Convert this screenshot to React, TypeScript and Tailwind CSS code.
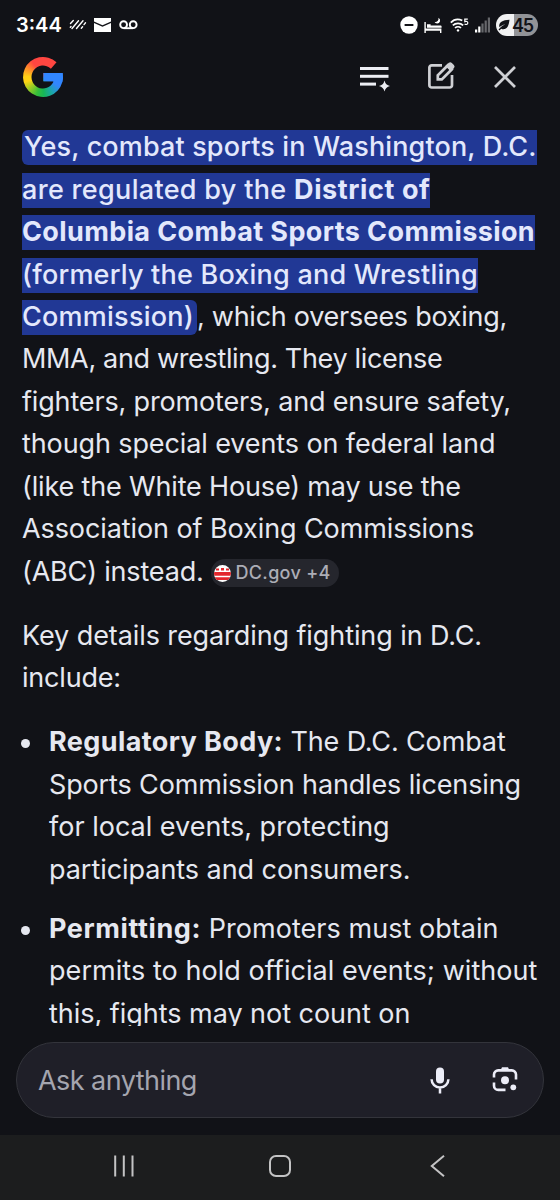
import type { ReactNode } from 'react';

function Line({ children, className = '' }: { children: ReactNode; className?: string }) {
  return <span className={`block h-[42.45px] leading-[42.45px] whitespace-nowrap ${className}`}>{children}</span>;
}

function Mark({ children, className = '' }: { children: ReactNode; className?: string }) {
  return <mark className={`bg-[#213895] text-[#e3e8fc] font-medium pb-[2px] ${className}`}>{children}</mark>;
}

function StatusBar() {
  return (
    <div className="h-[50px] flex items-center text-white pl-4 pr-[22px]">
      <span className="w-[44px] text-[20px] leading-[50px] font-semibold">3:44</span>

      {/* Notification icons */}
      <svg className="ml-[9px]" width="18" height="12" viewBox="0 0 18 12" stroke="currentColor" strokeWidth="1.4" strokeLinecap="round">
        <path d="M1.5 4.5 4.3 1.5M3 9.5 9.5 1.8M7.5 9.5 14 1.8" />
        <path d="M1.3 8.2 2 7.5M12.3 9.2 13.6 7.8M15 5.6 16.5 3.8" />
      </svg>
      <svg className="ml-[7px]" width="17" height="14" viewBox="0 0 17 14" fill="currentColor">
        <path d="M0 0h17v3.4L8.5 7.2 0 3.4Z" />
        <path d="M0 5l8.5 3.8L17 5v9H0Z" />
      </svg>
      <svg className="ml-2" width="19" height="10" viewBox="0 0 19 10" fill="none" stroke="currentColor" strokeWidth="1.9">
        <circle cx="4.6" cy="4.7" r="3.4" />
        <circle cx="14.2" cy="4.7" r="3.4" />
        <path d="M4.6 8.2h9.6" />
      </svg>

      {/* System icons */}
      <svg className="ml-auto" width="18" height="18" viewBox="0 0 18 18">
        <circle cx="9" cy="9" r="8.7" fill="currentColor" />
        <path d="M4.6 9h8.8" stroke="#111217" strokeWidth="2" />
      </svg>
      <svg className="ml-[6px]" width="19" height="17" viewBox="0 0 19 17" fill="currentColor">
        <path d="M.4 5h1.4v6.6h15.6V16H16v-2.2H1.8V16H.4Z" />
        <path d="M3 7.2h3.6v1.2h10a1 1 0 0 1 1 1v1.3H3Z" />
        <path d="M14.4.8a3.2 3.2 0 0 1-4 4 3.1 3.1 0 0 0 5.6-.3A3.2 3.2 0 0 0 14.4.8Z" />
      </svg>
      <svg className="ml-[7px]" width="19" height="15" viewBox="0 0 19 15" fill="none" stroke="currentColor" strokeWidth="1.7">
        <path d="M.8 4.6C4 1.3 8.6.8 12.3 2.6" />
        <path d="M2.8 7.4c2.9-2.8 7.5-2.8 10.4 0" />
        <path d="M5 10c1.700-1.600 4.300-1.600 6 0" />
        <circle cx="8" cy="12.4" r="1.2" fill="currentColor" stroke="none" />
        <path d="M17.8 1.100h-3v2.500c1.600-.6 3-.2 3 1.300 0 1.600-1.900 2-3.200 1.100" strokeWidth="1.2" />
      </svg>
      <svg className="ml-[6px]" width="16" height="16" viewBox="0 0 16 16" fill="currentColor">
        <rect x="0" y="12.5" width="2.2" height="3" />
        <rect x="3.2" y="9.5" width="2.2" height="6" />
        <g fill="#66676b">
          <rect x="6.4" y="6.5" width="2.2" height="9" />
          <rect x="9.6" y="3.5" width="2.2" height="12" />
          <rect x="12.8" y=".5" width="2.2" height="15" />
        </g>
      </svg>
      <div className="ml-[5px] w-[42px] h-[22px] rounded-full flex items-center overflow-hidden text-[#111217] bg-[linear-gradient(90deg,#f1f1f2_44%,#929397_44%)]">
        <svg className="ml-[2px]" width="12" height="12" viewBox="0 0 12 12" fill="currentColor">
          <path d="M11.5.8C10.800 6.500 9.300 10.300 5.300 10.300c-.9 0-1.500-.2-2-.6l-2 1.800-.8-.8C2.300 8.300 4.500 6.500 7.500 5.200 4.800 5.700 3 6.700 1.400 8.300.3 3.500 4.600.9 11.500.8Z" />
        </svg>
        <span className="ml-[2px] mt-px text-[18px] leading-none font-semibold tracking-[-1.2px]">45</span>
      </div>
    </div>
  );
}

function GoogleLogo() {
  return (
    <div className="w-10 h-10 overflow-hidden bg-[conic-gradient(#ff4641_0deg,#ff4641_55deg,#3186ff_55deg,#3186ff_120deg,#1ba6a8_150deg,#17b657_178deg,#35bf3a_200deg,#a5cc22_232deg,#ffd314_255deg,#ffcf16_272deg,#ff8b2a_300deg,#ff4641_325deg)] [clip-path:path('M33.5_5.2A20_20_0_1_0_39.6_16H20.4V24.2H30.7A11.5_11.5_0_1_1_27.9_11.7Z')]">
      <div className="mt-[15px] ml-5 w-5 h-[9.5px] bg-[#3186ff]" />
    </div>
  );
}

function Header() {
  return (
    <header className="h-[54px] flex items-center pl-[23px] pr-[44px] text-[#cfd0d4]">
      <GoogleLogo />
      <svg className="ml-auto mt-[3px]" width="32" height="26" viewBox="0 0 32 26" fill="#ecedf3">
        <rect x="1" y="1" width="28.5" height="3" />
        <rect x="1" y="8.8" width="28.5" height="3" />
        <rect x="1" y="16.6" width="16" height="3" />
        <path d="M25.5 14.500q1 4.500 5.500 5.500-4.500 1-5.500 5.500-1-4.500-5.500-5.500 4.500-1 5.500-5.500Z" />
      </svg>
      <svg className="ml-9 -mt-[3px]" width="29" height="29" viewBox="0 0 29 29" fill="none" stroke="currentColor" strokeWidth="2.7">
        <path d="M15 4.300H4.700A2.300 2.300 0 0 0 2.400 6.600v17.600a2.300 2.300 0 0 0 2.300 2.300h18a2.300 2.300 0 0 0 2.300-2.300V14" />
        <path d="M10.800 18.400v-4L20.700 4.500l4 4-9.900 9.900Z" />
        <path d="M19.500 5l2.800-2.600q1-.8 2 .1l2 2q.9 1 .1 2L23.800 9.300Z" fill="currentColor" strokeWidth="1.6" />
      </svg>
      <svg className="ml-[38px]" width="22" height="22" viewBox="0 0 22 22" fill="none" stroke="currentColor" strokeWidth="2.7">
        <path d="M1 1l20 20M21 1 1 21" />
      </svg>
    </header>
  );
}

function SourceChip() {
  return (
    <span className="ml-[7px] mt-[3px] w-[128px] h-[28px] rounded-full bg-[#25262d] text-[#acadb6] flex items-center pl-[3px] text-[18px] font-medium leading-none">
      <svg width="17" height="17" viewBox="0 0 17 17">
        <clipPath id="seal"><circle cx="8.5" cy="8.5" r="8.5" /></clipPath>
        <g clipPath="url(#seal)">
          <rect width="17" height="17" fill="#fff" />
          <path d="M2 3.500h3v2H2ZM7 3h3v2.500H7ZM12 3.500h3v2h-3ZM0 7h17v3.800H0ZM0 12.300h17v2.700H0Z" fill="#e3262c" />
        </g>
      </svg>
      <span className="ml-[5px] tracking-[0.3px]">DC.gov +4</span>
    </span>
  );
}

function Bullet({ children }: { children: ReactNode }) {
  return (
    <li className="flex">
      <span className="w-[9px] h-[9px] mt-[18px] mr-[19px] -ml-px rounded-full bg-[#e6e8f0] shrink-0" />
      <div>{children}</div>
    </li>
  );
}

function Answer() {
  return (
    <main className="h-[922px] overflow-hidden pt-[22.3px] pl-[22px] text-[27px] text-[#e6e8f0]">
      <p>
        <Line><Mark className="pl-[2px] rounded-l-[6px] tracking-[0.14px]">Yes, combat sports in Washington, D.C.</Mark></Line>
        <Line><Mark className="tracking-[0.32px]">are regulated by the <b className="font-bold tracking-[0.6px]">District of</b></Mark></Line>
        <Line><Mark className="tracking-[0.39px]"><b className="font-bold">Columbia Combat Sports Commission</b></Mark></Line>
        <Line><Mark className="tracking-[0.21px]">(formerly the Boxing and Wrestling</Mark></Line>
        <Line>
          <Mark className="pr-[3px] rounded-r-[6px] tracking-[0.25px]">Commission)</Mark>
          <span className="tracking-[-0.27px]">, which oversees boxing,</span>
        </Line>
        <Line className="tracking-[-0.34px]">MMA, and wrestling. They license</Line>
        <Line className="tracking-[-0.16px]">fighters, promoters, and ensure safety,</Line>
        <Line className="tracking-[-0.11px]">though special events on federal land</Line>
        <Line className="tracking-[-0.16px]">(like the White House) may use the</Line>
        <Line className="tracking-[-0.09px]">Association of Boxing Commissions</Line>
        <span className="flex items-center">
          <Line className="tracking-[-0.18px]">(ABC) instead.</Line>
          <SourceChip />
        </span>
      </p>
      <p className="mt-[21.5px]">
        <Line className="tracking-[-0.09px]">Key details regarding fighting in D.C.</Line>
        <Line className="tracking-[-0.2px]">include:</Line>
      </p>
      <ul className="mt-[22px] flex flex-col gap-[16.6px]">
        <Bullet>
          <Line><b className="font-bold tracking-[0.4px]">Regulatory Body:</b><span className="tracking-[-0.13px]"> The D.C. Combat</span></Line>
          <Line className="tracking-[-0.14px]">Sports Commission handles licensing</Line>
          <Line>for local events, protecting</Line>
          <Line className="tracking-[-0.05px]">participants and consumers.</Line>
        </Bullet>
        <Bullet>
          <Line><b className="font-bold tracking-[0.6px]">Permitting:</b><span className="tracking-[0.04px]"> Promoters must obtain</span></Line>
          <Line className="tracking-[0.06px]">permits to hold official events; without</Line>
          <Line className="tracking-[-0.03px]">this, fights may not count on</Line>
        </Bullet>
      </ul>
    </main>
  );
}

function Composer() {
  return (
    <div className="mt-4 mx-4 h-[76px] shrink-0 rounded-full border border-[#33343b] bg-[#1f1f28] flex items-center pl-[21px] pr-[25px] text-[#ecedf8]">
      <span className="mt-[2px] text-[27px] text-[#a4a5af] tracking-[-0.55px]">Ask anything</span>
      <svg className="ml-auto" width="20" height="27" viewBox="0 0 20 27" fill="none" stroke="currentColor" strokeWidth="2.5">
        <rect x="6" y=".5" width="8" height="16" rx="4" fill="currentColor" stroke="none" />
        <path d="M1.600 12.200a8.400 8.400 0 0 0 16.800 0M10 20.500v6" />
      </svg>
      <svg className="ml-[42px] -mt-[2px]" width="26" height="26" viewBox="0 0 26 26" fill="none" stroke="currentColor" strokeWidth="2.6">
        <path d="M2 11.500V8.600A4.200 4.200 0 0 1 6.200 4.400h13.600A4.200 4.200 0 0 1 24 8.600v4.900" />
        <path d="M2 16.500v3.200a4.200 4.200 0 0 0 4.200 4.200H13.500" />
        <path d="M8.500 4.500 10 1.200h6l1.500 3.300Z" fill="currentColor" stroke="none" />
        <circle cx="13" cy="14.2" r="4" fill="currentColor" stroke="none" />
        <circle cx="21.3" cy="21.3" r="2.9" fill="currentColor" stroke="none" />
      </svg>
    </div>
  );
}

function NavBar() {
  return (
    <nav className="mt-auto h-[65px] flex items-center bg-[#1c1d1e] pl-[113px] pr-[115px] pb-[3px] text-[#c3c3c4]">
      <svg width="21" height="22" viewBox="0 0 21 22" stroke="currentColor" strokeWidth="2">
        <path d="M2.200.5v21M10.800.5v21M19.500.5v21" />
      </svg>
      <svg className="ml-[135px]" width="22" height="22" viewBox="0 0 22 22" fill="none" stroke="currentColor" strokeWidth="2">
        <rect x="1" y="1" width="20" height="20" rx="6" />
      </svg>
      <svg className="ml-auto" width="15" height="22" viewBox="0 0 15 22" fill="none" stroke="currentColor" strokeWidth="2">
        <path d="M14 .8 1.800 11 14 21.200" />
      </svg>
    </nav>
  );
}

export default function App() {
  return (
    <div className="w-[560px] h-[1200px] overflow-hidden flex flex-col bg-[#111217] font-[Inter,sans-serif]">
      <StatusBar />
      <Header />
      <Answer />
      <Composer />
      <NavBar />
    </div>
  );
}
